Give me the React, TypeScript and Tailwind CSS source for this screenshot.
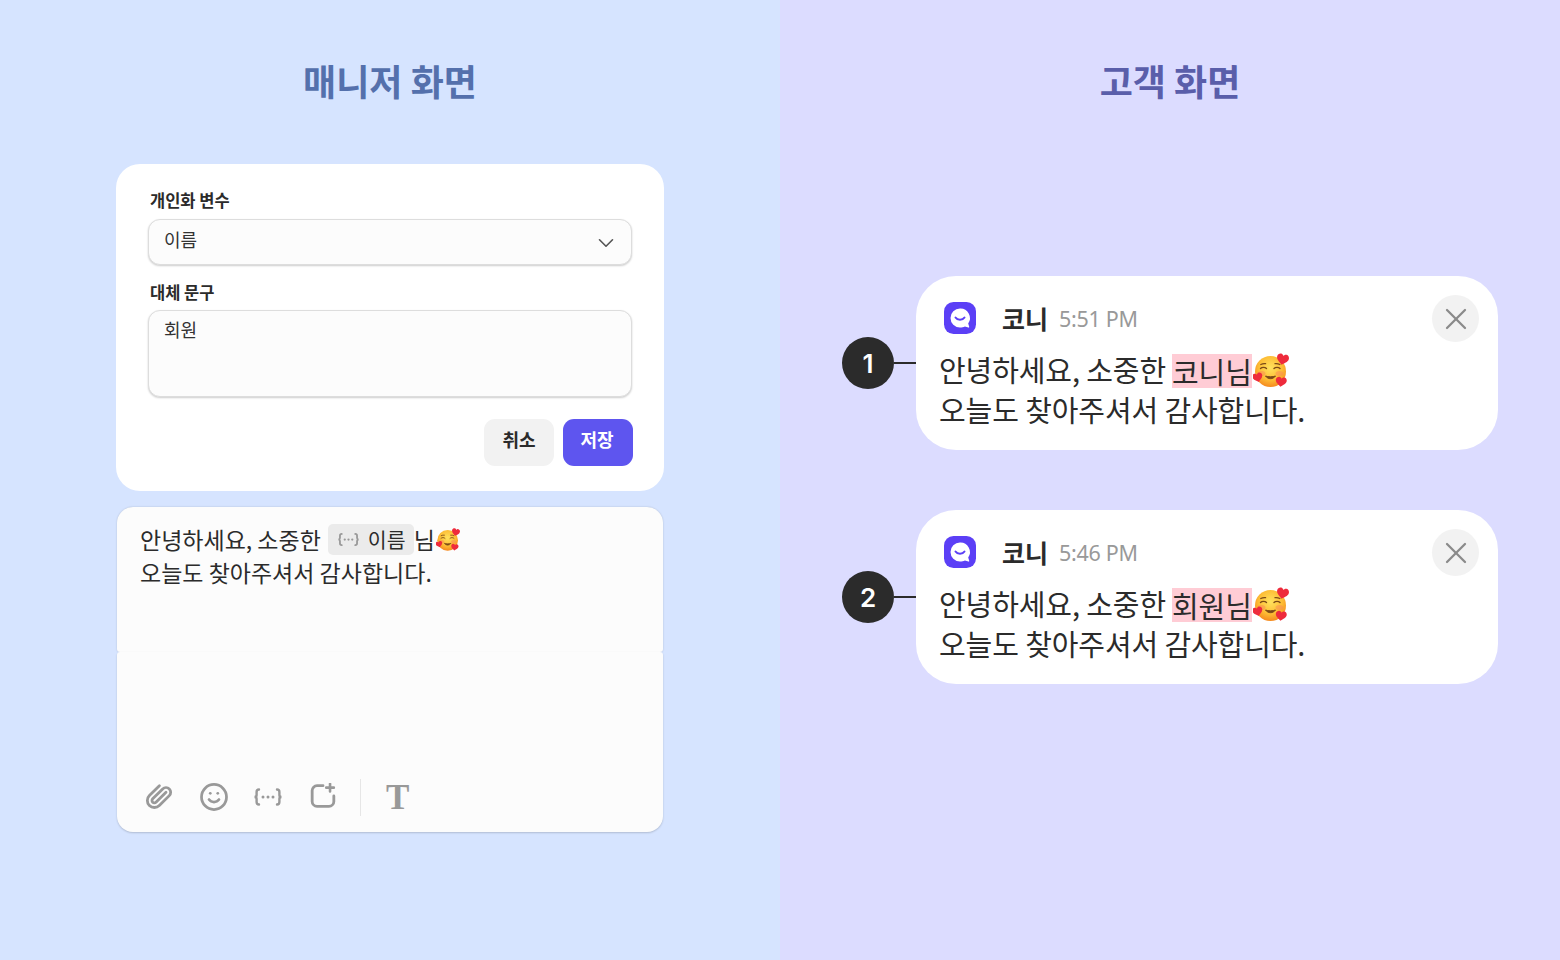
import { ChevronDown, Paperclip, Smile, X } from "lucide-react";

const FONT = "font-['Noto_Sans_CJK_KR','Noto_Sans',sans-serif]";

const BracesIcon = ({ className }: { className?: string }) => (
  <svg viewBox="0 0 30 20" fill="none" className={className}>
    <path
      d="M6 2.5C3.8 2.5 3.6 3.6 3.6 5v3c0 1.2-.6 2-2.100 2 1.500 0 2.100.8 2.100 2v3c0 1.400.2 2.500 2.400 2.500M24 2.500c2.200 0 2.400 1.100 2.400 2.500v3c0 1.200.6 2 2.100 2-1.500 0-2.100.8-2.100 2v3c0 1.400-.2 2.500-2.400 2.500"
      stroke="currentColor"
      strokeWidth="2.400"
      strokeLinecap="round"
    />
    <circle cx="10" cy="10" r="1.500" fill="currentColor" />
    <circle cx="15" cy="10" r="1.500" fill="currentColor" />
    <circle cx="20" cy="10" r="1.500" fill="currentColor" />
  </svg>
);

const AddShortcutIcon = ({ className }: { className?: string }) => (
  <svg viewBox="0 0 24 24" fill="none" className={className}>
    <path
      d="M12 2.500H6.500a4.500 4.500 0 0 0-4.500 4.500v10a4.500 4.500 0 0 0 4.500 4.500h11a4.500 4.500 0 0 0 4.500-4.500v-5"
      stroke="currentColor"
      strokeWidth="2.600"
      strokeLinecap="round"
    />
    <path d="M18.500 0.800v7M15 4.300h7" stroke="currentColor" strokeWidth="2.400" strokeLinecap="round" />
  </svg>
);

const Heart = ({ x, y, s, rotate }: { x: number; y: number; s: number; rotate: number }) => (
  <path
    transform={`translate(${x} ${y}) rotate(${rotate}) scale(${s})`}
    d="M0 4C-1.500 2.400-5 .8-5-2-5-4 -3.500-5-2.300-5-1.200-5-.4-4.300 0-3.400.4-4.300 1.200-5 2.300-5 3.500-5 5-4 5-2 5 .8 1.500 2.400 0 4Z"
    fill="#ee2b3c"
  />
);

const LoveEmoji = ({ className, id }: { className?: string; id: string }) => (
  <svg viewBox="0 0 36 36" className={className}>
    <defs>
      <radialGradient id={id} cx="50%" cy="38%" r="62%">
        <stop offset="0%" stopColor="#ffe25e" />
        <stop offset="62%" stopColor="#fdbd35" />
        <stop offset="100%" stopColor="#f58a1f" />
      </radialGradient>
    </defs>
    <circle cx="17.500" cy="18.500" r="15.500" fill={`url(#${id})`} />
    <ellipse cx="8.500" cy="20.500" rx="4" ry="2.500" fill="#f8835a" opacity="0.45" />
    <ellipse cx="26.500" cy="20.500" rx="4" ry="2.500" fill="#f8835a" opacity="0.45" />
    <path
      d="M7.500 15.500c1.500-1.600 4.500-1.600 6 0M21 15.500c1.500-1.600 4.500-1.600 6 0M7.800 11.500c1.500-.8 3.200-1 4.800-.8M22 10.700c1.600-.2 3.300 0 4.800.8"
      fill="none"
      stroke="#7c4a17"
      strokeWidth="1.300"
      strokeLinecap="round"
    />
    <path d="M12.500 23c2.500 3.600 7.500 3.600 10 0-2.500 1-7.500 1-10 0Z" fill="#7c4a17" stroke="#7c4a17" strokeWidth="1" strokeLinejoin="round" />
    <Heart x={29.500} y={7} s={1.200} rotate={12} />
    <Heart x={4.800} y={25} s={1} rotate={-14} />
    <Heart x={28} y={29.500} s={1.100} rotate={8} />
  </svg>
);

const ChannelLogo = () => (
  <svg viewBox="0 0 32 32" className="-mt-[2px] h-[32px] w-[32px] shrink-0">
    <rect width="32" height="32" rx="9.500" fill="#5b3ff6" />
    <path
      d="M16 6.500a9.500 9.500 0 1 0 0 19c1.900 0 3.500-.3 4.900-1.100l3.500 1.200c.6.200 1-.3.800-.8l-1-3.400A9.500 9.500 0 0 0 16 6.500Z"
      fill="#fff"
    />
    <path d="M11.500 15.500c2 3 7 3 9 0" fill="none" stroke="#5b3ff6" strokeWidth="2" strokeLinecap="round" />
  </svg>
);

const ChatCard = ({ no, time, name, emojiId }: { no: number; time: string; name: string; emojiId: string }) => (
  <div className="flex items-center">
    <div className="flex h-[52px] w-[52px] shrink-0 items-center justify-center rounded-full bg-[#2b2b2b] text-[26px] font-semibold text-white font-['Inter',sans-serif]">
      {no}
    </div>
    <div className="h-[2px] w-[22px] bg-[#2b2b2b]" />
    <div className="h-[174px] w-[582px] rounded-[40px] bg-white pl-[23px] pr-[19px] pt-[19px]">
      <div className="flex h-[47px] items-center">
        <div className="ml-[5px] flex items-center">
          <ChannelLogo />
          <span className="ml-[26px] text-[25px] font-bold text-[#2b2b2b]">코니</span>
          <span className="ml-[11px] mt-[1px] text-[21.500px] tracking-[-0.3px] text-[#999999] font-['Noto_Sans',sans-serif]">{time}</span>
        </div>
        <div className="ml-auto flex h-[47px] w-[47px] items-center justify-center rounded-full bg-[#f2f2f2]">
          <X size={36} strokeWidth={1.500} className="text-[#8a8a8a]" />
        </div>
      </div>
      <div className="mt-[7px] text-[29px] leading-[40px] tracking-[-0.1px] text-[#2b2b2b]">
        <div className="flex items-center">
          안녕하세요, 소중한
          <span className="ml-[6px] mt-[3px] flex h-[34px] items-center bg-[#ffccd5]">{name}님</span>
          <LoveEmoji id={emojiId} className="ml-[1px] mt-[4px] h-[36px] w-[36px]" />
        </div>
        <div>오늘도 찾아주셔서 감사합니다.</div>
      </div>
    </div>
  </div>
);

export default function App() {
  return (
    <div className={`flex h-[960px] w-[1560px] overflow-hidden ${FONT}`}>
      <div className="flex w-[780px] flex-col items-center bg-[#d6e4ff]">
        <div className="h-[164px] shrink-0 pt-[54px]">
          <h1 className="text-[36px] font-bold leading-[52px] tracking-[0px] text-[#5470ac]">매니저 화면</h1>
        </div>

        <div className="h-[327px] w-[548px] rounded-[24px] bg-white px-[32px] pt-[24px]">
          <div className="h-[24px] pl-[2px] text-[16.500px] font-bold leading-[24px] text-[#2b2b2b]">개인화 변수</div>
          <div className="mt-[7px] flex h-[46px] items-center justify-between rounded-[12px] border border-[#dddddd] bg-[#fcfcfc] pb-[3px] pl-[15px] pr-[12px] shadow-[0_1px_2px_rgba(0,0,0,0.2)]">
            <span className="-mt-[2px] text-[18px] text-[#333333]">이름</span>
            <ChevronDown size={26} strokeWidth={1.500} className="mt-[5px] text-[#555555]" />
          </div>
          <div className="mt-[15px] h-[24px] pl-[2px] text-[16.500px] font-bold leading-[24px] text-[#2b2b2b]">대체 문구</div>
          <div className="mt-[6px] h-[87px] rounded-[12px] border border-[#dddddd] bg-[#fcfcfc] pl-[15px] pt-[5px] text-[18px] leading-[26px] text-[#333333] shadow-[0_1px_2px_rgba(0,0,0,0.2)]">
            회원
          </div>
          <div className="-mr-[1px] mt-[22px] flex justify-end gap-[9px]">
            <button className="h-[47px] w-[70px] rounded-[11px] bg-[#f2f2f2] pb-[7px] text-[18px] font-bold text-[#2b2b2b]">취소</button>
            <button className="h-[47px] w-[70px] rounded-[11px] bg-[#5e55ef] pb-[7px] pr-[2px] text-[18px] font-bold text-white">저장</button>
          </div>
        </div>

        <div className="mt-[16px] w-[546px]">
          <div className="h-[145px] rounded-b-[3px] rounded-t-[16px] bg-[#fcfcfc] pl-[23px] pt-[16px] text-[23px] leading-[33px] tracking-[0px] text-[#2b2b2b] shadow-[0_0_2px_rgba(0,0,0,0.18)]">
            <div className="flex h-[33px] items-center">
              안녕하세요, 소중한
              <span className="ml-[7px] flex h-[31px] w-[86px] items-center rounded-[5px] bg-[#ebebeb] pl-[9px] text-[20.500px]">
                <BracesIcon className="h-[15px] w-[23px] text-[#999999]" />
                <span className="ml-[8px]">이름</span>
              </span>
              <span>님</span>
              <LoveEmoji id="love-small" className="ml-[1px] h-[24px] w-[24px]" />
            </div>
            <div>오늘도 찾아주셔서 감사합니다.</div>
          </div>
          <div className="flex h-[180px] items-end rounded-b-[16px] rounded-t-[3px] bg-[#fcfcfc] pb-[16px] pl-[29px] text-[#999999] shadow-[0_1px_2px_rgba(0,0,0,0.18)]">
            <Paperclip size={28} strokeWidth={2.400} className="-ml-[1px] mb-[5px] -scale-x-100 rotate-90" />
            <Smile size={30} strokeWidth={2.200} className="mb-[4px] ml-[26px]" />
            <BracesIcon className="mb-[9px] ml-[24px] h-[20px] w-[30px]" />
            <AddShortcutIcon className="mb-[7px] ml-[27px] h-[26px] w-[26px]" />
            <div className="ml-[24px] h-[37px] w-[1px] bg-[#e6e6e6]" />
            <span className="mb-[-1px] ml-[25px] text-[35px] font-bold leading-[38px] font-['Liberation_Serif',serif]">T</span>
          </div>
        </div>
      </div>

      <div className="flex w-[780px] flex-col bg-[#dcdcff]">
        <div className="flex h-[276px] shrink-0 justify-center pt-[54px]">
          <h1 className="text-[36px] font-bold leading-[52px] tracking-[0px] text-[#5a5eaa]">고객 화면</h1>
        </div>
        <div className="flex flex-col gap-[60px] pl-[62px]">
          <ChatCard no={1} time="5:51 PM" name="코니" emojiId="love-a" />
          <ChatCard no={2} time="5:46 PM" name="회원" emojiId="love-b" />
        </div>
      </div>
    </div>
  );
}
